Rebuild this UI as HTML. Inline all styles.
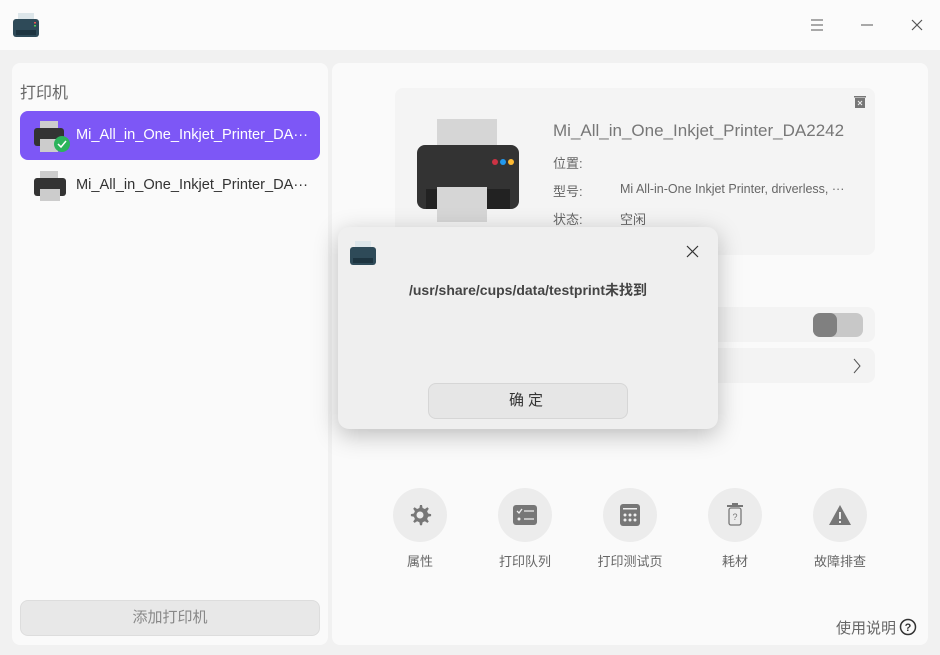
<!DOCTYPE html>
<html><head><meta charset="utf-8"><style>
*{margin:0;padding:0;box-sizing:border-box}
body{width:940px;height:655px;overflow:hidden;background:#f1f1f1;font-family:"Liberation Sans","Noto Sans CJK SC",sans-serif;position:relative;color:#333}
.abs{position:absolute}
.title{left:0;top:0;width:940px;height:50px;background:#fbfbfb}
.panel{background:#fafafa;border-radius:8px}
.txt{white-space:nowrap}
.circ{width:54px;height:54px;border-radius:50%;background:#ececec;display:flex;align-items:center;justify-content:center}
.lbl{font-size:13px;color:#666;width:100px;text-align:center}
</style></head><body>
<div class="abs title"></div>
<svg class="abs" style="left:12px;top:12px" width="28" height="26" viewBox="0 0 28 26"><rect x="6" y="1" width="16" height="8" fill="#dde6ea"/><rect x="1" y="7" width="26" height="18" rx="3" fill="#2e4a58"/><rect x="4" y="18" width="20" height="5" fill="#1d3440"/><rect x="22" y="10" width="2" height="1.5" fill="#e55"/><rect x="22" y="13" width="2" height="1.5" fill="#5c5"/></svg>
<svg class="abs" style="left:810px;top:18px" width="14" height="14"><path d="M1 2h12M1 7h12M1 12h12" stroke="#555" stroke-width="1"/></svg>
<svg class="abs" style="left:860px;top:18px" width="14" height="14"><path d="M1 7h12" stroke="#555"/></svg>
<svg class="abs" style="left:910px;top:18px" width="14" height="14"><path d="M2 2l10 10M12 2L2 12" stroke="#555" stroke-width="1.2"/></svg>

<div class="abs panel" style="left:12px;top:63px;width:316px;height:582px"></div>
<div class="abs panel" style="left:332px;top:63px;width:596px;height:582px"></div>
<div class="abs txt" style="left:20px;top:79px;font-size:16px;color:#666">打印机</div>
<div class="abs" style="left:20px;top:111px;width:300px;height:49px;background:#7d57f6;border-radius:8px"></div>
<svg class="abs" style="left:34px;top:120px" width="38" height="34" viewBox="0 0 38 34"><rect x="6" y="1" width="18" height="8" fill="#ccc"/><rect x="0" y="8" width="30" height="18" rx="3" fill="#333"/><rect x="6" y="19" width="18" height="13" fill="#ccc"/><circle cx="28" cy="24" r="8" fill="#2bb35c"/><path d="M24 24l3 3 5-6" stroke="#fff" stroke-width="1.5" fill="none"/></svg>
<div class="abs txt" style="left:76px;top:127px;font-size:14.6px;color:#fff">Mi_All_in_One_Inkjet_Printer_DA···</div>
<svg class="abs" style="left:34px;top:170px" width="32" height="32" viewBox="0 0 32 32"><rect x="6" y="1" width="18" height="8" fill="#ccc"/><rect x="0" y="8" width="32" height="18" rx="3" fill="#333"/><rect x="6" y="19" width="20" height="12" fill="#ccc"/></svg>
<div class="abs txt" style="left:76px;top:177px;font-size:14.6px;color:#333">Mi_All_in_One_Inkjet_Printer_DA···</div>
<div class="abs" style="left:20px;top:600px;width:300px;height:36px;background:#e8e8e8;border:1px solid #ddd;border-radius:8px;font-size:15px;color:#888;text-align:center;line-height:34px">添加打印机</div>

<div class="abs" style="left:395px;top:88px;width:480px;height:167px;background:#f4f4f4;border-radius:8px"></div>
<svg class="abs" style="left:853px;top:95px" width="14" height="14"><rect x="2" y="3" width="10" height="10" fill="#777"/><rect x="1" y="1" width="12" height="1.5" fill="#777"/><path d="M5 6l4 4M9 6l-4 4" stroke="#eee"/></svg>
<svg class="abs" style="left:415px;top:117px" width="106" height="108" viewBox="0 0 106 108"><rect x="22" y="2" width="60" height="30" fill="#d6d6d6"/><rect x="2" y="28" width="102" height="64" rx="8" fill="#333"/><circle cx="80" cy="45" r="3" fill="#c34"/><circle cx="88" cy="45" r="3" fill="#29e"/><circle cx="96" cy="45" r="3" fill="#fb3"/><rect x="11" y="72" width="84" height="20" fill="#222"/><rect x="22" y="70" width="50" height="35" fill="#d6d6d6"/></svg>
<div class="abs txt" style="left:553px;top:121px;font-size:17px;color:#777">Mi_All_in_One_Inkjet_Printer_DA2242</div>
<div class="abs txt" style="left:553px;top:153px;font-size:13px;color:#666">位置:</div>
<div class="abs txt" style="left:553px;top:181px;font-size:13px;color:#666">型号:</div>
<div class="abs txt" style="left:620px;top:182px;font-size:12.5px;color:#666">Mi All-in-One Inkjet Printer, driverless, ···</div>
<div class="abs txt" style="left:553px;top:209px;font-size:13px;color:#666">状态:</div>
<div class="abs txt" style="left:620px;top:209px;font-size:13px;color:#666">空闲</div>
<div class="abs" style="left:395px;top:307px;width:480px;height:35px;background:#f3f3f3;border-radius:8px"></div>
<div class="abs" style="left:813px;top:313px;width:50px;height:24px;background:#c8c8c8;border-radius:7px"><div style="width:24px;height:24px;background:#808080;border-radius:7px"></div></div>
<div class="abs" style="left:395px;top:348px;width:480px;height:35px;background:#f3f3f3;border-radius:8px"></div>
<svg class="abs" style="left:852px;top:358px" width="10" height="16"><path d="M2 1l6 7-6 7" stroke="#555" fill="none"/></svg>

<div class="abs" style="left:338px;top:227px;width:380px;height:202px;background:#efefef;border-radius:11px;box-shadow:0 6px 24px rgba(0,0,0,.25)"></div>
<svg class="abs" style="left:349px;top:240px" width="28" height="26" viewBox="0 0 28 26"><rect x="6" y="1" width="16" height="8" fill="#dde6ea"/><rect x="1" y="7" width="26" height="18" rx="3" fill="#2e4a58"/><rect x="4" y="18" width="20" height="5" fill="#1d3440"/></svg>
<svg class="abs" style="left:686px;top:245px" width="13" height="13"><path d="M1 1l11 11M12 1L1 12" stroke="#333" stroke-width="1.2"/></svg>
<div class="abs txt" style="left:338px;width:380px;text-align:center;top:280px;font-size:14px;font-weight:bold;color:#444">/usr/share/cups/data/testprint未找到</div>
<div class="abs" style="left:428px;top:383px;width:200px;height:36px;background:#e6e6e6;border:1px solid #d6d6d6;border-radius:8px;text-align:center;line-height:34px;font-size:15px;color:#333;letter-spacing:4px">确定</div>

<div class="abs circ" style="left:393px;top:488px"><svg width="24" height="24" viewBox="0 0 24 24"><path d="M12 2l2 0 .6 3 2.3 1 2.5-1.7 1.4 1.4-1.7 2.5 1 2.3 3 .6v2l-3 .6-1 2.3 1.7 2.5-1.4 1.4-2.5-1.7-2.3 1-.6 3h-2l-.6-3-2.3-1-2.5 1.7-1.4-1.4 1.7-2.5-1-2.3-3-.6v-2l3-.6 1-2.3-1.7-2.5 1.4-1.4 2.5 1.7 2.3-1 .6-3z" fill="#777"/><circle cx="12" cy="12" r="3.5" fill="#ececec"/></svg></div>
<div class="abs circ" style="left:498px;top:488px"><svg width="26" height="22"><rect x="1" y="1" width="24" height="20" rx="3" fill="#777"/><path d="M5 7l2 2 3-4M12 7h10M12 15h10" stroke="#eee" stroke-width="1.3" fill="none"/><circle cx="7" cy="15" r="1.5" fill="#eee"/></svg></div>
<div class="abs circ" style="left:603px;top:488px"><svg width="22" height="24"><rect x="1" y="1" width="20" height="22" rx="3" fill="#777"/><rect x="4" y="5" width="14" height="1.5" fill="#eee"/><g fill="#eee"><circle cx="6" cy="12" r="1.5"/><circle cx="11" cy="12" r="1.5"/><circle cx="16" cy="12" r="1.5"/><circle cx="6" cy="17" r="1.5"/><circle cx="11" cy="17" r="1.5"/><circle cx="16" cy="17" r="1.5"/></g></svg></div>
<div class="abs circ" style="left:708px;top:488px"><svg width="18" height="24"><rect x="1" y="2" width="16" height="2" fill="#777"/><rect x="6" y="0" width="6" height="2" fill="#777"/><rect x="3" y="5" width="12" height="17" rx="2" fill="none" stroke="#777" stroke-width="1.3"/><text x="9" y="17" font-size="9" text-anchor="middle" fill="#777" font-family="Liberation Sans">?</text></svg></div>
<div class="abs circ" style="left:813px;top:488px"><svg width="24" height="22"><path d="M12 1L23 21H1z" fill="#777"/><rect x="11" y="8" width="2" height="7" fill="#ececec"/><rect x="11" y="17" width="2" height="2" fill="#ececec"/></svg></div>
<div class="abs lbl" style="left:370px;top:551px">属性</div>
<div class="abs lbl" style="left:475px;top:551px">打印队列</div>
<div class="abs lbl" style="left:580px;top:551px">打印测试页</div>
<div class="abs lbl" style="left:685px;top:551px">耗材</div>
<div class="abs lbl" style="left:790px;top:551px">故障排查</div>
<div class="abs txt" style="left:836px;top:617px;font-size:15px;color:#666">使用说明</div>
<svg class="abs" style="left:899px;top:618px" width="18" height="18"><circle cx="9" cy="9" r="7.5" fill="none" stroke="#333" stroke-width="1.5"/><text x="9" y="13" font-size="11" font-weight="bold" text-anchor="middle" fill="#333" font-family="Liberation Sans">?</text></svg>
</body></html>
